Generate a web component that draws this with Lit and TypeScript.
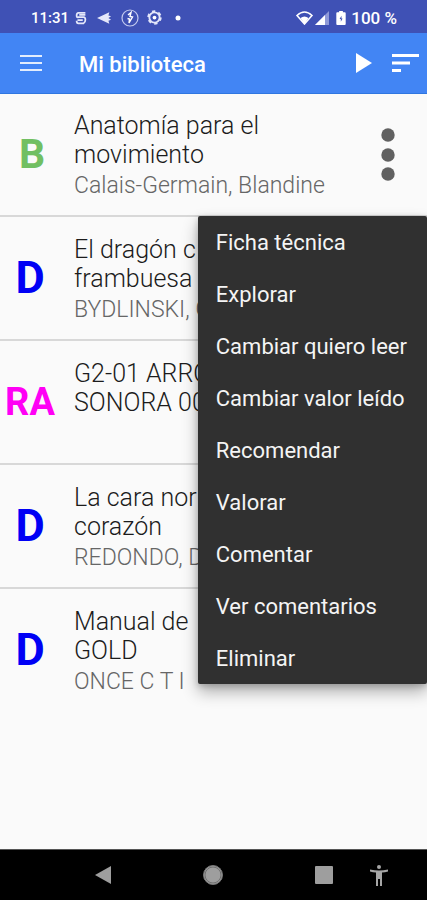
import { LitElement, html, css, svg, nothing } from "lit";
import { customElement, property } from "lit/decorators.js";
import { classMap } from "lit/directives/class-map.js";

interface Book {
  kind: "B" | "D" | "RA";
  title: string[];
  author: string;
  menuOpen?: boolean;
}

const BOOKS: Book[] = [
  { kind: "B", title: ["Anatomía para el", "movimiento"], author: "Calais-Germain, Blandine", menuOpen: true },
  { kind: "D", title: ["El dragón c", "frambuesa"], author: "BYDLINSKI, G" },
  { kind: "RA", title: ["G2-01 ARRO", "SONORA 00"], author: "" },
  { kind: "D", title: ["La cara nor", "corazón"], author: "REDONDO, D" },
  { kind: "D", title: ["Manual de", "GOLD"], author: "ONCE C T I" },
];

const ACTIONS = [
  "Ficha técnica",
  "Explorar",
  "Cambiar quiero leer",
  "Cambiar valor leído",
  "Recomendar",
  "Valorar",
  "Comentar",
  "Ver comentarios",
  "Eliminar",
];

@customElement("status-bar")
export class StatusBar extends LitElement {
  static styles = css`
    :host {
      display: flex;
      align-items: center;
      height: 33px;
      padding: 2px 30px 0 31px;
      box-sizing: border-box;
      background: #3f51b5;
      color: #fff;
      font: 500 17px/20px Roboto, sans-serif;
    }
    .time {
      font-size: 15px;
    }
    .icons {
      display: flex;
      align-items: center;
      gap: 8px;
      margin-left: 5px;
    }
    .system {
      display: flex;
      align-items: center;
      gap: 2px;
      margin-left: auto;
    }
    .battery {
      margin: 0 3px 0 4px;
    }
    svg {
      display: block;
    }
  `;

  render() {
    return html`
      <span class="time">11:31</span>
      <div class="icons">
        <svg width="14" height="14" viewBox="0 0 14 16" fill="none" stroke="#e4e7fa" stroke-width="2">
          <path d="M12 2H4Q2 2 2 5T4 7H10Q12 7 12 10T10 14H4Q2 14 2 11M5 4.500H12M3 10.500H9" />
        </svg>
        <svg width="17" height="14" viewBox="0 0 17 16" fill="#e4e7fa">
          <path d="M0 8L14 1.500L13 5L16 6L13 8L16 10L13 11L14 14.500Z" />
        </svg>
        <svg width="18" height="18" viewBox="0 0 18 18" fill="none" stroke="#c3caef">
          <circle cx="9" cy="9" r="8" stroke-width="1.200" />
          <path d="M7 6L10 3.500L9 7.500L11.500 8L8 14L8.500 10L6.500 9.500" stroke="#fff" stroke-width="1.400" />
        </svg>
        <svg width="15" height="15" viewBox="0 0 16 16" fill="none" stroke="#e4e7fa">
          <circle cx="8" cy="8" r="5.500" stroke-width="2" />
          <circle cx="8" cy="8" r="6.700" stroke-width="2" stroke-dasharray="3.500 3.520" />
          <circle cx="8" cy="8" r="2" fill="#fff" stroke="none" />
        </svg>
        <svg width="16" height="6" viewBox="0 0 16 6" fill="#fff">
          <circle cx="8" cy="3" r="2.500" />
        </svg>
      </div>
      <div class="system">
        <svg width="17" height="14" viewBox="0 0 17 14">
          <path d="M1 4.500Q8.500 -2.500 16 4.500L8.500 13Z" fill="none" stroke="#fff" stroke-width="1.600" />
          <path d="M4.500 7Q8.500 4 12.500 7L8.500 13Z" fill="#fff" />
        </svg>
        <svg width="15" height="14" viewBox="0 0 15 14">
          <path d="M0 14L14 0V14Z" fill="#8f9ad8" />
          <path d="M0 14L10 4V14Z" fill="#fff" />
        </svg>
        <svg class="battery" width="10" height="15" viewBox="0 0 10 16">
          <path d="M3 1H7V2.500H9Q10 2.500 10 3.500V15Q10 16 9 16H1Q0 16 0 15V3.500Q0 2.500 1 2.500H3Z" fill="#fff" />
          <path d="M5.500 6L3.500 9.500H4.800V12.500L6.700 9H5.500Z" fill="#3f51b5" />
        </svg>
        <span>100 %</span>
      </div>
    `;
  }
}

@customElement("title-bar")
export class TitleBar extends LitElement {
  static styles = css`
    :host {
      display: flex;
      align-items: center;
      height: 61px;
      padding: 0 8px 0 20px;
      box-sizing: border-box;
      border-bottom: 1px solid #2f76e0;
      background: #4285f4;
      color: #fff;
    }
    h1 {
      margin: 3px auto 0 37px;
      font: 500 22px/28px Roboto, sans-serif;
    }
    button {
      padding: 0;
      border: 0;
      background: none;
      color: inherit;
    }
    .play {
      margin-right: 20px;
    }
    svg {
      display: block;
    }
  `;

  render() {
    return html`
      <button aria-label="Menú">
        <svg width="22" height="16" viewBox="0 0 22 16" fill="#e3edfd">
          <path d="M0 0H22V2H0ZM0 7H22V9H0ZM0 14H22V16H0Z" />
        </svg>
      </button>
      <h1>Mi biblioteca</h1>
      <button class="play" aria-label="Reproducir">
        <svg width="16" height="20" viewBox="0 0 16 20" fill="#fff"><path d="M0 0L16 10L0 20Z" /></svg>
      </button>
      <button aria-label="Ordenar">
        <svg width="27" height="18" viewBox="0 0 27 18" fill="#fff">
          <path d="M0 0H27V3H0ZM0 7.500H18V10.500H0ZM0 15H9V18H0Z" />
        </svg>
      </button>
    `;
  }
}

@customElement("action-menu")
export class ActionMenu extends LitElement {
  static styles = css`
    :host {
      display: block;
      border-radius: 2px;
      background: #303030;
      box-shadow: 0 8px 16px rgba(0, 0, 0, 0.3), 0 2px 6px rgba(0, 0, 0, 0.2);
    }
    button {
      display: block;
      width: 100%;
      height: 52px;
      padding: 2px 20px 0 18px;
      border: 0;
      background: none;
      color: #f4f4f4;
      font: 400 22px/28px Roboto, sans-serif;
      text-align: left;
      white-space: nowrap;
    }
  `;

  render() {
    return html`
      <div role="menu">${ACTIONS.map((label) => html`<button role="menuitem">${label}</button>`)}</div>
    `;
  }
}

@customElement("book-row")
export class BookRow extends LitElement {
  @property({ attribute: false }) book!: Book;

  static styles = css`
    :host {
      display: grid;
      grid-template-columns: 60px 1fr auto;
      align-items: start;
      column-gap: 14px;
      position: relative;
      height: 124px;
      padding: 18px 32px 0 0;
      box-sizing: border-box;
      font-family: Roboto, sans-serif;
    }
    .kind {
      align-self: center;
      padding-bottom: 20px;
      text-align: center;
      font-weight: 700;
      line-height: 48px;
    }
    .b {
      padding-left: 4px;
      color: #71bf62;
      font-size: 41px;
    }
    .d {
      color: #0000f5;
      font-size: 45px;
    }
    .ra {
      color: #ff00f5;
      font-size: 38px;
    }
    h2 {
      margin: 0;
      color: #1c1c1c;
      font-size: 25px;
      font-weight: 300;
      line-height: 29px;
      white-space: nowrap;
    }
    .line {
      display: block;
    }
    p {
      margin: 2px 0 0;
      color: #666;
      font-size: 23px;
      font-weight: 300;
      line-height: 29px;
      white-space: nowrap;
    }
    .more {
      margin-top: 17px;
      padding: 0;
      border: 0;
      background: none;
    }
    .more svg {
      display: block;
    }
    action-menu {
      position: absolute;
      z-index: 1;
      top: 100%;
      right: 0;
      margin-top: -1px;
    }
  `;

  render() {
    const { kind, title, author, menuOpen } = this.book;
    return html`
      <span class=${classMap({ kind: true, [kind.toLowerCase()]: true })}>${kind}</span>
      <div>
        <h2>${title.map((line) => html`<span class="line">${line}</span>`)}</h2>
        ${author ? html`<p>${author}</p>` : nothing}
      </div>
      ${menuOpen
        ? html`
            <button class="more" aria-label="Más opciones" aria-expanded="true">
              <svg width="14" height="54" viewBox="0 0 14 54" fill="#616161">
                ${[7, 27, 46].map((y) => svg`<circle cx="7" cy=${y} r="6.700" />`)}
              </svg>
            </button>
            <action-menu></action-menu>
          `
        : nothing}
    `;
  }
}

@customElement("nav-bar")
export class NavBar extends LitElement {
  static styles = css`
    :host {
      display: grid;
      grid-template-columns: 1fr 1fr 1fr;
      align-items: center;
      position: relative;
      height: 51px;
      padding: 0 48px;
      box-sizing: border-box;
      border-top: 1px solid #555;
      background: #000;
    }
    button {
      justify-self: center;
      padding: 0;
      border: 0;
      background: none;
    }
    .access {
      position: absolute;
      right: 39px;
    }
    svg {
      display: block;
    }
  `;

  render() {
    return html`
      <button aria-label="Atrás">
        <svg width="16" height="18" viewBox="0 0 16 18" fill="#9e9e9e"><path d="M16 0V18L0 9Z" /></svg>
      </button>
      <button aria-label="Inicio">
        <svg width="22" height="22" viewBox="0 0 22 22">
          <circle cx="11" cy="11" r="9.500" fill="#9e9e9e" stroke="#777" />
          <circle cx="11" cy="11" r="8" fill="none" stroke="#707070" />
        </svg>
      </button>
      <button aria-label="Recientes">
        <svg width="18" height="18" viewBox="0 0 18 18" fill="#9e9e9e"><rect width="18" height="18" rx="1" /></svg>
      </button>
      <button class="access" aria-label="Accesibilidad">
        <svg width="18" height="21" viewBox="0 0 18 21" fill="#a6a6a6">
          <circle cx="9" cy="2" r="2" />
          <path d="M0 4.500Q9 6.500 18 4.500V6.500Q15 7.300 12 7.500V21H10V14H8V21H6V7.500Q3 7.300 0 6.500Z" />
        </svg>
      </button>
    `;
  }
}

@customElement("app-root")
export class AppRoot extends LitElement {
  static styles = css`
    :host {
      display: flex;
      flex-direction: column;
      min-height: 100vh;
      background: #fafafa;
    }
    .list {
      flex: 1;
      margin: -1px 0 0;
      padding: 0;
      list-style: none;
    }
    .item + .item {
      border-top: 2px solid #d8d8d8;
      margin-top: -2px;
    }
  `;

  render() {
    return html`
      <status-bar></status-bar>
      <title-bar></title-bar>
      <ul class="list">
        ${BOOKS.map((book) => html`<li class="item"><book-row .book=${book}></book-row></li>`)}
      </ul>
      <nav-bar></nav-bar>
    `;
  }
}
